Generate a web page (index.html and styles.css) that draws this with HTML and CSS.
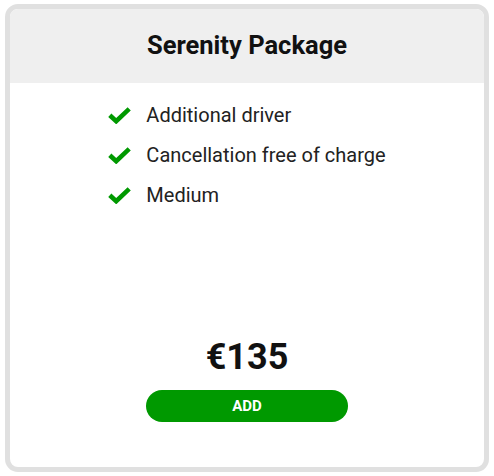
FILE: index.html
```html
<!DOCTYPE html>
<html lang="en">
<head>
<meta charset="utf-8">
<title>Serenity Package</title>
<link rel="stylesheet" href="styles.css">
</head>
<body>
<div class="card">
  <div class="card-header">
    <h2 class="title">Serenity Package</h2>
  </div>
  <div class="card-body">
    <ul class="features">
      <li class="feature">
        <svg class="check" viewBox="0 0 23 17" width="23" height="17"><path d="M1.8 8.2 L8.2 14.2 L21.2 1.8" fill="none" stroke="#009900" stroke-width="4.6" stroke-linejoin="miter"/></svg>
        <span>Additional driver</span>
      </li>
      <li class="feature">
        <svg class="check" viewBox="0 0 23 17" width="23" height="17"><path d="M1.8 8.2 L8.2 14.2 L21.2 1.8" fill="none" stroke="#009900" stroke-width="4.6" stroke-linejoin="miter"/></svg>
        <span>Cancellation free of charge</span>
      </li>
      <li class="feature">
        <svg class="check" viewBox="0 0 23 17" width="23" height="17"><path d="M1.8 8.2 L8.2 14.2 L21.2 1.8" fill="none" stroke="#009900" stroke-width="4.6" stroke-linejoin="miter"/></svg>
        <span>Medium</span>
      </li>
    </ul>
    <div class="footer">
      <div class="price">€135</div>
      <button class="add-btn" type="button">ADD</button>
    </div>
  </div>
</div>
</body>
</html>
```
FILE: styles.css
```css
html, body {
  margin: 0;
  padding: 0;
  background: #ffffff;
}
body {
  font-family: Roboto, "Liberation Sans", sans-serif;
  color: #222222;
  padding: 4px 5px;
}
.card {
  box-sizing: border-box;
  width: 484px;
  height: 468px;
  border: 5px solid #e0e0e0;
  border-radius: 13px;
  overflow: hidden;
  display: flex;
  flex-direction: column;
  background: #ffffff;
}
.card-header {
  height: 74px;
  background: #efefef;
  display: flex;
  align-items: center;
  justify-content: center;
}
.title {
  margin: 0 0 2px;
  font-size: 25.5px;
  font-weight: 700;
  color: #111111;
}
.card-body {
  flex: 1;
  display: flex;
  flex-direction: column;
  align-items: center;
  padding: 12px 0 45px;
}
.features {
  list-style: none;
  margin: 0;
  padding: 0;
}
.feature {
  display: flex;
  align-items: center;
  gap: 15px;
  height: 40px;
  font-size: 20px;
  color: #222222;
}
.check {
  display: block;
  flex: none;
}
.footer {
  margin-top: auto;
  display: flex;
  flex-direction: column;
  align-items: center;
}
.price {
  font-size: 36px;
  font-weight: 700;
  line-height: 40px;
  color: #111111;
  margin-bottom: 13px;
}
.add-btn {
  width: 202px;
  height: 32px;
  border: none;
  border-radius: 16px;
  background: #009900;
  color: #ffffff;
  font-family: Roboto, "Liberation Sans", sans-serif;
  font-size: 15px;
  font-weight: 700;
  padding: 0;
}
```
